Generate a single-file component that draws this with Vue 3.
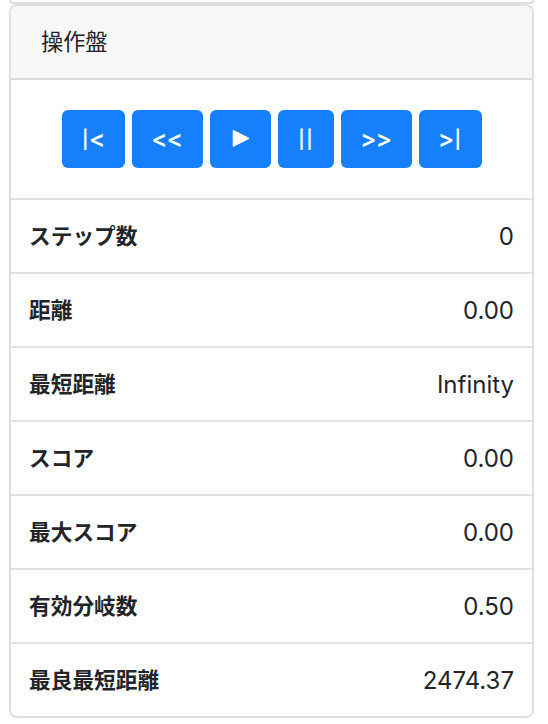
<script setup>
const controls = [
  { label: '|<', size: 'first' },
  { label: '<<', size: 'wide' },
  { label: 'play', size: 'play' },
  { label: '||', size: 'pause' },
  { label: '>>', size: 'wide' },
  { label: '>|', size: 'first' },
]
const stats = [
  ['ステップ数', '0'],
  ['距離', '0.00'],
  ['最短距離', 'Infinity'],
  ['スコア', '0.00'],
  ['最大スコア', '0.00'],
  ['有効分岐数', '0.50'],
  ['最良最短距離', '2474.37'],
]
</script>

<template>
  <main class="page">
    <div class="previous"></div>
    <section class="card">
      <header class="header">操作盤</header>
      <div class="controls">
        <button v-for="c in controls" :key="c.label" class="btn" :class="c.size">
          <svg v-if="c.label === 'play'" width="18" height="20" viewBox="0 0 18 20">
            <path d="M1.3 1.6 16.6 9.4 1.3 17.2Z" fill="#fff" stroke="#fff" stroke-width="1.2" stroke-linejoin="round" />
          </svg>
          <template v-else>
            <span v-for="(ch, i) in c.label" :key="i" :class="ch === '|' ? 'bar' : 'angle'">{{ ch }}</span>
          </template>
        </button>
      </div>
      <dl class="stats">
        <div v-for="[name, value] in stats" :key="name" class="row">
          <dt>{{ name }}</dt>
          <dd>{{ value }}</dd>
        </div>
      </dl>
    </section>
  </main>
</template>

<style>
body { margin: 0; background: #fff; }
</style>
<style scoped>
.page {
  box-sizing: border-box;
  width: 548px;
  height: 724px;
  padding: 0 14px 0 9px;
  overflow: hidden;
  font-family: Inter, "Noto Sans CJK JP", sans-serif;
  color: #212529;
}
.previous {
  box-sizing: border-box;
  height: 4px;
  border: 2px solid #dfdfdf;
  border-top: 0;
  border-radius: 0 0 8px 8px;
}
.card {
  box-sizing: border-box;
  height: 714px;
  border: 2px solid #dfdfdf;
  border-radius: 8px;
  overflow: hidden;
}
.header {
  box-sizing: border-box;
  height: 74px;
  padding-left: 30px;
  border-bottom: 2px solid #dadada;
  background: #f7f7f7;
  font: 22.2px/68px "Noto Sans CJK JP", sans-serif;
}
.controls {
  box-sizing: border-box;
  height: 118px;
  display: flex;
  justify-content: center;
  gap: 7px;
  padding-top: 30px;
  padding-left: 1px;
}
.btn {
  box-sizing: border-box;
  display: flex;
  align-items: center;
  justify-content: center;
  height: 58px;
  padding: 0 1px 0 0;
  border: 0;
  border-radius: 6px;
  background: #167ffc;
  color: #fff;
  font: 24px/36px Inter, sans-serif;
}
.angle,
.bar {
  display: flex;
  justify-content: center;
}
.angle {
  width: 15.5px;
  font-size: 24px;
  font-weight: 600;
}
.bar {
  width: 8px;
  padding-top: 1px;
  font-size: 18px;
  font-weight: 600;
}
.first { width: 63px; }
.wide { width: 71px; }
.play { width: 61px; padding: 0; }
.pause { width: 56px; }
.stats { margin: 0; }
.row {
  box-sizing: border-box;
  display: flex;
  justify-content: space-between;
  height: 74px;
  padding: 0 18px;
  border-top: 2px solid #dee2e6;
}
dt {
  font: 700 21.7px/70px "Noto Sans CJK JP", sans-serif;
}
dd {
  margin: 0;
  font-size: 24px;
  line-height: 74px;
}
</style>
